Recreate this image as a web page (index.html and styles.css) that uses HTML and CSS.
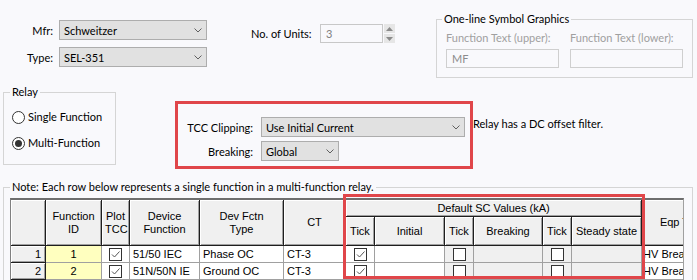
FILE: index.html
```html
<!DOCTYPE html>
<html lang="en">
<head>
    <meta charset="UTF-8">
    <title>Relay Properties</title>
    <link rel="stylesheet" href="styles.css">
</head>
<body>
    <div class="top">
        <div class="maker">
            <div class="row">
                <span class="lbl">Mfr:</span>
                <div class="combo maker-combo">Schweitzer<svg class="chev" width="8" height="5" viewBox="0 0 8 5"><path d="M0.5 0.5 L4 4 L7.5 0.5" fill="none" stroke="#606060"/></svg></div>
            </div>
            <div class="row">
                <span class="lbl">Type:</span>
                <div class="combo maker-combo">SEL-351<svg class="chev" width="8" height="5" viewBox="0 0 8 5"><path d="M0.5 0.5 L4 4 L7.5 0.5" fill="none" stroke="#606060"/></svg></div>
            </div>
        </div>

        <div class="units">
            <span class="lbl">No. of Units:</span>
            <div class="numbox">3</div>
            <div class="spinner">
                <span><svg width="7" height="4" viewBox="0 0 7 4"><path d="M0 4 L3.5 0 L7 4 Z" fill="#8a8a8a"/></svg></span>
                <span><svg width="7" height="4" viewBox="0 0 7 4"><path d="M0 0 L3.5 4 L7 0 Z" fill="#8a8a8a"/></svg></span>
            </div>
        </div>

        <fieldset class="group symbols">
            <legend>One-line Symbol Graphics</legend>
            <div class="sym-row">
                <div class="sym">
                    <div class="dim">Function Text (upper):</div>
                    <div class="textbox">MF</div>
                </div>
                <div class="sym">
                    <div class="dim">Function Text (lower):</div>
                    <div class="textbox"></div>
                </div>
            </div>
        </fieldset>
    </div>

    <div class="mid">
        <fieldset class="group relay">
            <legend>Relay</legend>
            <div class="radio first"><span class="dot"></span>Single Function</div>
            <div class="radio"><span class="dot on"></span>Multi-Function</div>
        </fieldset>

        <div class="clip">
            <span class="lbl">TCC Clipping:</span>
            <div class="combo">Use Initial Current<svg class="chev" width="8" height="5" viewBox="0 0 8 5"><path d="M0.5 0.5 L4 4 L7.5 0.5" fill="none" stroke="#606060"/></svg></div>
            <span class="lbl">Breaking:</span>
            <div class="combo short">Global<svg class="chev" width="8" height="5" viewBox="0 0 8 5"><path d="M0.5 0.5 L4 4 L7.5 0.5" fill="none" stroke="#606060"/></svg></div>
        </div>

        <div class="dc-note">Relay has a DC offset filter.</div>
    </div>

    <fieldset class="group note">
        <legend>Note: Each row below represents a single function in a multi-function relay.</legend>
        <div class="grid-area">
            <div class="grid-wrap">
                <table class="grid">
                    <colgroup>
                        <col style="width:35px"><col style="width:56px"><col style="width:28px">
                        <col style="width:70px"><col style="width:84px"><col style="width:62px">
                        <col style="width:29px"><col style="width:70px"><col style="width:29px">
                        <col style="width:69px"><col style="width:29px"><col style="width:70px">
                        <col style="width:83px">
                    </colgroup>
                    <thead>
                        <tr class="h1">
                            <th rowspan="2"></th>
                            <th rowspan="2">Function<br>ID</th>
                            <th rowspan="2">Plot<br>TCC</th>
                            <th rowspan="2">Device<br>Function</th>
                            <th rowspan="2">Dev Fctn<br>Type</th>
                            <th rowspan="2">CT</th>
                            <th colspan="6">Default SC Values (kA)</th>
                            <th rowspan="2">Eqp Type</th>
                        </tr>
                        <tr class="h2">
                            <th>Tick</th>
                            <th>Initial</th>
                            <th>Tick</th>
                            <th>Breaking</th>
                            <th>Tick</th>
                            <th>Steady state</th>
                        </tr>
                    </thead>
                    <tbody>
                        <tr>
                            <td class="rowhead">1</td>
                            <td class="fid">1</td>
                            <td class="box"><span class="check on"><svg width="11" height="11" viewBox="0 0 11 11"><path d="M2 5.5 L4.5 8 L9.5 2.5" fill="none" stroke="#555"/></svg></span></td>
                            <td>51/50 IEC</td>
                            <td>Phase OC</td>
                            <td>CT-3</td>
                            <td class="box"><span class="check on"><svg width="11" height="11" viewBox="0 0 11 11"><path d="M2 5.5 L4.5 8 L9.5 2.5" fill="none" stroke="#555"/></svg></span></td>
                            <td></td>
                            <td class="box off"><span class="check"></span></td>
                            <td class="off"></td>
                            <td class="box off"><span class="check"></span></td>
                            <td class="off"></td>
                            <td class="eqp">HV Breaker</td>
                        </tr>
                        <tr>
                            <td class="rowhead">2</td>
                            <td class="fid">2</td>
                            <td class="box"><span class="check on"><svg width="11" height="11" viewBox="0 0 11 11"><path d="M2 5.5 L4.5 8 L9.5 2.5" fill="none" stroke="#555"/></svg></span></td>
                            <td>51N/50N IE</td>
                            <td>Ground OC</td>
                            <td>CT-3</td>
                            <td class="box"><span class="check on"><svg width="11" height="11" viewBox="0 0 11 11"><path d="M2 5.5 L4.5 8 L9.5 2.5" fill="none" stroke="#555"/></svg></span></td>
                            <td></td>
                            <td class="box off"><span class="check"></span></td>
                            <td class="off"></td>
                            <td class="box off"><span class="check"></span></td>
                            <td class="off"></td>
                            <td class="eqp">HV Breaker</td>
                        </tr>
                    </tbody>
                </table>
            </div>
            <div class="highlight"></div>
        </div>
    </fieldset>
</body>
</html>
```

FILE: styles.css
```css
body {
    margin: 0;
    width: 697px;
    height: 280px;
    overflow: hidden;
    background: #f9f9fc;
    font-family: Lato, "Liberation Sans", sans-serif;
    font-size: 11px;
    color: #000;
}

.lbl { white-space: nowrap; }

/* combo boxes */
.combo {
    height: 20px;
    box-sizing: border-box;
    border: 1px solid #adadad;
    background: #e1e1e1;
    display: flex;
    align-items: center;
    justify-content: space-between;
    padding: 0 4px 0 4px;
    white-space: nowrap;
}

.group {
    margin: 0;
    border: 1px solid #d5d5d5;
    box-sizing: border-box;
    min-inline-size: 0;
}

.group legend {
    padding: 0 2px;
    line-height: 16px;
    white-space: nowrap;
}

/* top row */
.top {
    display: flex;
    align-items: flex-start;
    height: 84px;
    padding-top: 11px;
    box-sizing: border-box;
}

.maker {
    margin-top: 9px;
    display: flex;
    flex-direction: column;
    gap: 7px;
}

.maker .row {
    display: flex;
    align-items: center;
    gap: 6px;
}

.maker .lbl {
    width: 53px;
    text-align: right;
}

.maker-combo { width: 148px; }

.units {
    margin: 13px 0 0 44px;
    display: flex;
    align-items: center;
}

.units .lbl {
    width: 61px;
    margin-right: 8px;
}

.numbox {
    width: 63px;
    height: 19px;
    box-sizing: border-box;
    border: 1px solid #c8c8c8;
    padding-left: 5px;
    line-height: 17px;
    color: #808080;
}

.spinner {
    margin-left: 1px;
    width: 11px;
    height: 19px;
    display: flex;
    flex-direction: column;
    gap: 1px;
}

.spinner span {
    flex: 1;
    background: #e6e6e6;
    display: flex;
    align-items: center;
    justify-content: center;
}

.symbols {
    margin-left: 41px;
    width: 257px;
    padding: 0 9px 9px 9px;
}

.symbols legend { margin-left: -4px; }

.sym-row {
    display: flex;
    gap: 11px;
}

.sym { width: 113px; }

.dim {
    color: #a0a0a0;
    margin-top: 3px;
    line-height: 15px;
    white-space: nowrap;
}

.textbox {
    margin-top: 4px;
    height: 19px;
    box-sizing: border-box;
    border: 1px solid #cfcfcf;
    padding-left: 5px;
    line-height: 17px;
    color: #8c8c8c;
}

/* middle row */
.mid {
    display: flex;
    align-items: flex-start;
    height: 95px;
}

.relay {
    margin-left: 3px;
    width: 113px;
    height: 81px;
    padding: 0 8px;
}

.relay legend { margin-left: -2px; }

.radio {
    display: flex;
    align-items: center;
    gap: 3px;
    line-height: 16px;
    margin-top: 10px;
    white-space: nowrap;
}

.radio.first { margin-top: 9px; }

.dot {
    width: 13px;
    height: 13px;
    box-sizing: border-box;
    border: 1px solid #333;
    border-radius: 50%;
    background: #fff;
    display: flex;
    align-items: center;
    justify-content: center;
}

.dot.on::after {
    content: "";
    width: 7px;
    height: 7px;
    border-radius: 50%;
    background: #333;
}

.clip {
    margin: 17px 0 0 59px;
    border: 3px solid #e0464a;
    padding: 13px 5px 5px 0;
    display: grid;
    grid-template-columns: 75px 204px;
    column-gap: 8px;
    row-gap: 4px;
    align-items: center;
}

.clip .lbl { text-align: right; }

.clip .short {
    width: 78px;
    justify-self: start;
}

.dc-note {
    margin-top: 32px;
    line-height: 16px;
    white-space: nowrap;
}

/* grid */
.note {
    margin-left: 3px;
    width: 690px;
    height: 101px;
    padding: 0 6px;
    border-bottom: none;
}

.note legend { margin-left: 0; }

.grid-area {
    position: relative;
    margin-top: 3px;
}

.grid-wrap {
    width: 674px;
    height: 82px;
    box-sizing: border-box;
    overflow: hidden;
    border-top: 2px solid #6e6e6e;
    border-left: 1px solid #808080;
    border-right: 1px solid #a0a0a0;
    background: #fff;
}

.grid {
    width: 714px;
    table-layout: fixed;
    border-collapse: separate;
    border-spacing: 0;
    font-family: "Liberation Sans", Arial, sans-serif;
    font-size: 11px;
}

.grid th,
.grid td {
    box-sizing: border-box;
    padding: 0 3px;
    white-space: nowrap;
    overflow: hidden;
}

.grid th {
    background: #f0f0f0;
    font-weight: normal;
    line-height: 13px;
    border-right: 1px solid #1e1e1e;
    border-bottom: 1px solid #1e1e1e;
    box-shadow: inset 1px 1px 0 #fff, inset -1px -1px 0 #a0a0a0;
}

.grid .h1 th { height: 17px; }
.grid .h2 th { height: 29px; }

.grid td {
    height: 17px;
    line-height: 15px;
    border-right: 1px solid #a0a0a0;
    border-bottom: 1px solid #a0a0a0;
    background: #fff;
}

.grid td.rowhead {
    background: #f0f0f0;
    text-align: right;
    padding-right: 4px;
    border-right: 1px solid #1e1e1e;
    border-bottom: 1px solid #1e1e1e;
    box-shadow: inset 1px 1px 0 #fff, inset -1px -1px 0 #a0a0a0;
}

.grid td.fid {
    background: #ffffbf;
    text-align: center;
}

.grid td.off { background: #f0f0f0; }

.grid td.box {
    text-align: center;
    padding: 0;
}

.grid td.eqp { padding-left: 1px; }

.check {
    display: inline-block;
    vertical-align: middle;
    width: 13px;
    height: 13px;
    box-sizing: border-box;
    border: 1px solid #333;
    background: #fff;
}

.check svg { display: block; }

.highlight {
    position: absolute;
    left: 333px;
    top: -4px;
    width: 302px;
    height: 85px;
    box-sizing: border-box;
    border: 3px solid #e0464a;
}
```
